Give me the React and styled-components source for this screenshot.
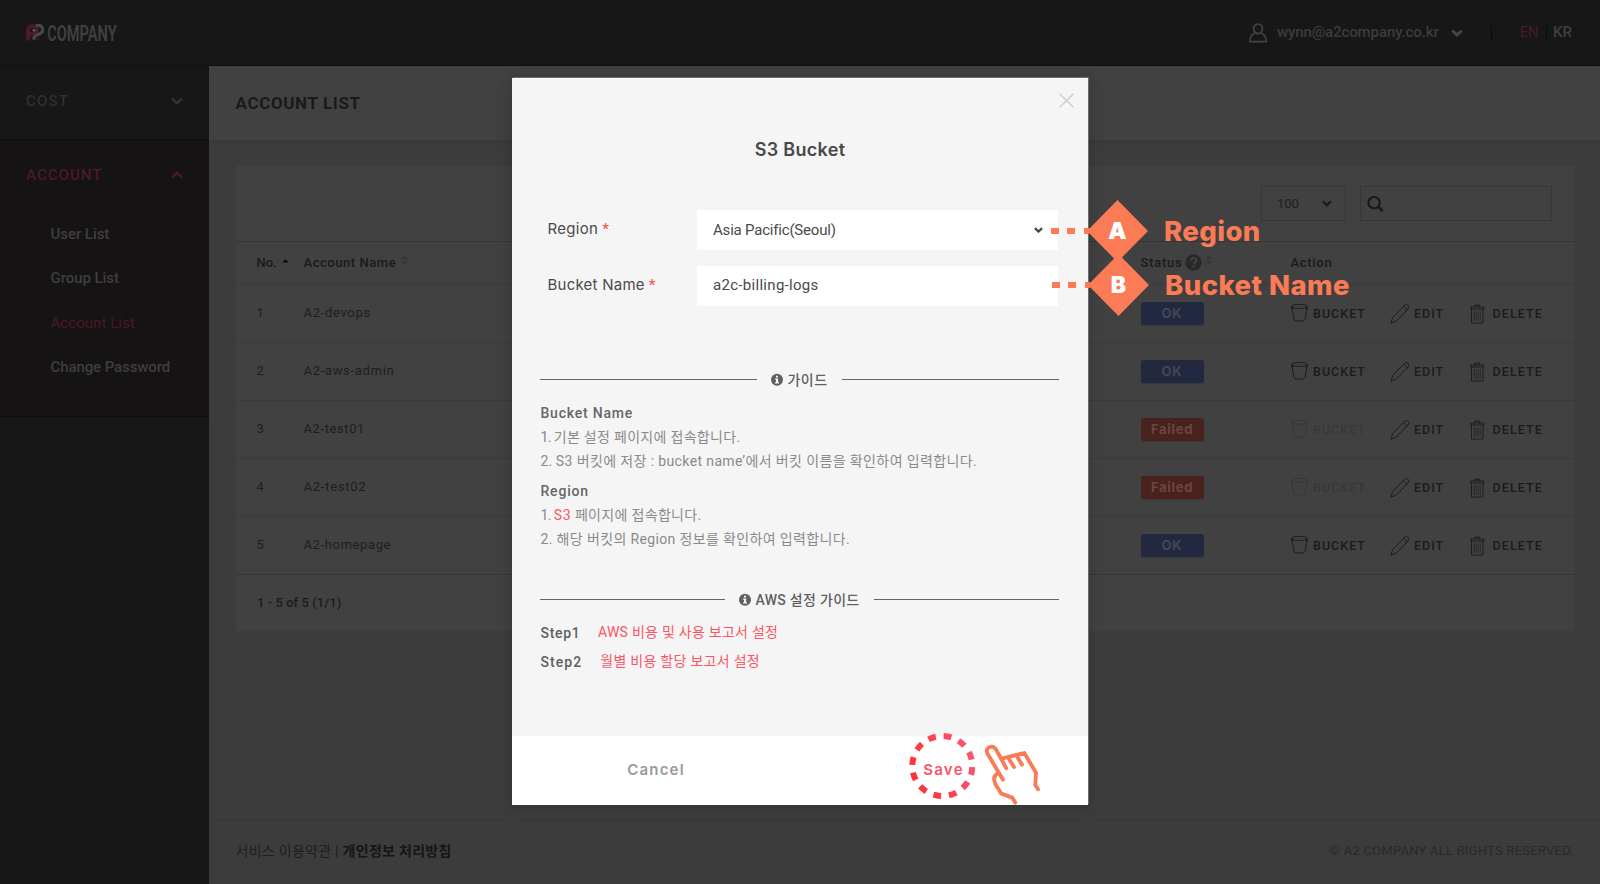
import React from "react";
import styled, { createGlobalStyle } from "styled-components";

const GlobalStyle = createGlobalStyle`
  *, *::before, *::after { box-sizing: border-box; }
  body {
    margin: 0;
    background: #3c3c3c;
    font-family: Roboto, "Noto Sans CJK KR", sans-serif;
    overflow: hidden;
  }
`;

const Page = styled.div`
  position: relative;
  display: flex;
  flex-direction: column;
  height: 884px;
  overflow: hidden;
`;

/* Spacing-adjusted run of text */
const Label = styled.span`
  white-space: pre;
  letter-spacing: ${(p) => p.$ls || 0}px;
`;

const WideLabel = styled(Label)`
  font-family: Inter, "Noto Sans CJK KR", sans-serif;
`;

/* ---------- header ---------- */
const Header = styled.header`
  display: flex;
  align-items: center;
  justify-content: space-between;
  height: 66px;
  padding: 0 28px 0 26px;
  background: #171717;
  border-bottom: 1px solid #101010;
`;

const HeaderRight = styled.div`
  display: flex;
  align-items: center;
  height: 66px;
  font-size: 15px;
  font-weight: 500;
  color: #3c3c3c;
`;

const Email = styled(Label)`
  margin: 0 12px 2px 10px;
`;

const Divider = styled.span`
  width: 1px;
  height: 15px;
  background: #0c0c0c;
  margin: ${(p) => p.$margin};
`;

const Lang = styled(Label)`
  margin-bottom: 2px;
  font-weight: ${(p) => (p.$active ? 400 : 500)};
  color: ${(p) => (p.$active ? "#481a20" : "#404040")};
`;

/* ---------- sidebar ---------- */
const Main = styled.div`
  display: flex;
  flex: 1;
`;

const Sidebar = styled.nav`
  width: 209px;
  background: #171717;
`;

const MenuSection = styled.section`
  background: ${(p) => (p.$open ? "#161314" : "#171717")};
  border-bottom: 1px solid #0f0e0e;
`;

const MenuHead = styled.div`
  display: flex;
  align-items: center;
  justify-content: space-between;
  height: ${(p) => p.$height}px;
  padding: 0 26px ${(p) => (p.$open ? 1 : 3)}px 26px;
  font-size: 15px;
  font-weight: 500;
  color: ${(p) => (p.$open ? "#4b1b21" : "#303030")};
`;

const MenuList = styled.ul`
  list-style: none;
  margin: 0;
  padding: 1px 0 27px 50.5px;
`;

const MenuItem = styled.li`
  height: 44.25px;
  line-height: 44px;
  font-size: 15px;
  font-weight: ${(p) => (p.$active ? 400 : 500)};
  color: ${(p) => (p.$active ? "#481a20" : "#3e3e3e")};
`;

/* ---------- content ---------- */
const Content = styled.main`
  flex: 1;
  display: flex;
  flex-direction: column;
  background: #3c3c3c;
`;

const TitleBar = styled.div`
  height: 74px;
  line-height: 74px;
  padding-left: 26.5px;
  background: #414141;
  box-shadow: 0 2px 4px rgba(0, 0, 0, 0.08);
  font-size: 17px;
  font-weight: 700;
  color: #1a1a1a;
`;

const Card = styled.section`
  width: 1338px;
  margin: 26px 0 0 27px;
  background: #414141;
`;

const Toolbar = styled.div`
  display: flex;
  justify-content: flex-end;
  gap: 14px;
  height: 75px;
  padding: 20px 22px 0 0;
`;

const PageSize = styled.div`
  display: flex;
  align-items: center;
  justify-content: space-between;
  width: 85px;
  height: 35px;
  padding: 0 13px 0 15px;
  border: 1px solid #373737;
  font-size: 13px;
  color: #1e1e1e;
`;

const SearchBox = styled.div`
  display: flex;
  align-items: center;
  width: 192px;
  height: 35px;
  padding-left: 6px;
  border: 1px solid #373737;
`;

const Row = styled.div`
  display: grid;
  grid-template-columns: 47px 837px 150px 1fr;
  align-items: center;
  height: ${(p) => (p.$head ? 43 : 58)}px;
  padding-left: 20.5px;
  border-top: 1px solid ${(p) => (p.$strong ? "#363636" : "#3a3a3a")};
  font-size: 13px;
  font-weight: ${(p) => (p.$head ? 500 : 400)};
  color: ${(p) => (p.$head ? "#1a1a1a" : "#1e1e1e")};
`;

const Cell = styled.div`
  display: flex;
  align-items: center;
  padding-bottom: ${(p) => (p.$lift ? 2 : 0)}px;
`;

const HeadCell = styled(Cell)`
  gap: ${(p) => p.$gap || 5}px;
  padding-bottom: 2px;
`;

const Badge = styled.span`
  width: 63px;
  height: 23px;
  line-height: 23px;
  border-radius: 3px;
  text-align: center;
  font-family: Inter, sans-serif;
  font-size: 13px;
  font-weight: 700;
  letter-spacing: ${(p) => (p.$ok ? 0.8 : 0.7)}px;
  background: ${(p) => (p.$ok ? "#22283f" : "#49211d")};
  color: ${(p) => (p.$ok ? "#424755" : "#6a4644")};
  box-shadow: 0 1px 1px rgba(0, 0, 0, 0.15);
`;

const ActionButton = styled.span`
  display: flex;
  align-items: center;
  gap: ${(p) => p.$gap}px;
  width: ${(p) => p.$width}px;
  font-size: 12.5px;
  font-weight: 500;
  color: ${(p) => (p.$disabled ? "#383838" : "#1b1b1b")};
`;

const CardFooter = styled.div`
  height: 57px;
  line-height: 56px;
  padding-left: 21px;
  border-top: 1px solid #363636;
  font-size: 13px;
  font-weight: 500;
  color: #1c1c1c;
`;

const PageFooter = styled.footer`
  display: flex;
  justify-content: space-between;
  align-items: center;
  height: 64px;
  margin-top: auto;
  padding: 0 26px 5px 26.5px;
  border-top: 1px solid #373737;
  font-size: 14px;
  color: #1e1e1e;
`;

const Copyright = styled(Label)`
  font-size: 13px;
  color: #292929;
`;

const Bold = styled.b`
  font-weight: 700;
  color: #151515;
`;

/* ---------- modal ---------- */
const ModalLayer = styled.div`
  position: absolute;
  inset: 0;
  display: flex;
  justify-content: center;
  align-items: flex-start;
  padding-top: 78px;
`;

const Modal = styled.div`
  position: relative;
  width: 576px;
  height: 727px;
  display: flex;
  flex-direction: column;
  background: #f5f5f5;
  box-shadow: 1px -1px 0 #6c6c6c, 0 0 14px rgba(0, 0, 0, 0.2);
`;

const ModalTop = styled.div`
  display: flex;
  justify-content: flex-end;
  height: 50px;
  padding: 15px 14.5px 0 0;
`;

const ModalTitle = styled.h2`
  margin: 0;
  height: 44px;
  line-height: 44px;
  text-align: center;
  font-size: 18px;
  font-weight: 600;
  color: #484848;
`;

const Form = styled.div`
  display: flex;
  flex-direction: column;
  gap: 16px;
  padding: 38px 30px 0 35.5px;
`;

const Field = styled.div`
  display: flex;
  height: 40px;
  font-size: 15px;
  color: #4a4a4a;
`;

const FieldLabel = styled.div`
  width: 149.5px;
  line-height: 38px;
`;

const Required = styled.span`
  color: #fa5a52;
  font-weight: 500;
  margin-left: 4px;
`;

const Control = styled.div`
  flex: 1;
  display: flex;
  align-items: center;
  justify-content: space-between;
  padding: 0 15px ${(p) => (p.$lift ? 3 : 1)}px 16px;
  background: #fff;
`;

const Guide = styled.div`
  padding: 0 29px 0 28px;
  margin-top: ${(p) => p.$top}px;
  font-size: 14px;
  color: #8a8a8a;
`;

const GuideHeading = styled.div`
  display: flex;
  align-items: center;
  height: 20px;
  font-weight: 500;
  color: #5f5f5f;

  &::before,
  &::after {
    content: "";
    flex: 1;
    height: 1px;
    background: #666;
  }
`;

const HeadingText = styled.span`
  display: flex;
  align-items: center;
  gap: 4px;
  margin: 0 14px;
`;

const GuideLine = styled.div`
  height: 24px;
  line-height: 24px;
  margin-left: 0.5px;
`;

const GuideTerm = styled(GuideLine)`
  height: ${(p) => p.$height || 24}px;
  margin-top: ${(p) => p.$top || 0}px;
  font-weight: 500;
  color: #666;
`;

const Link = styled(Label)`
  color: #fb5565;
`;

const Step = styled.div`
  display: flex;
  gap: ${(p) => p.$gap}px;
  height: 29px;
  line-height: 29px;
  font-weight: 500;
  color: #606060;

  ${Link} {
    font-weight: 400;
    line-height: 27px;
  }
`;

const ModalFooter = styled.div`
  display: grid;
  grid-template-columns: 1fr 1fr;
  height: 69px;
  margin-top: auto;
  background: #fff;
`;

const FooterButton = styled.button`
  border: 0;
  padding: ${(p) => (p.$primary ? "0 1px 3px 0" : "0 0 3px 0")};
  background: none;
  font: 600 15px Inter, sans-serif;
  letter-spacing: ${(p) => p.$ls}px;
  color: ${(p) => (p.$primary ? "#f9556a" : "#9a9a9a")};
`;

/* ---------- call-outs drawn over the page ---------- */
const Callout = styled.div`
  position: absolute;
  left: ${(p) => p.$x}px;
  top: ${(p) => p.$y}px;
  display: flex;
  align-items: center;
  height: 62px;
  color: #fa7b56;
  font-family: Inter, sans-serif;
  font-size: 27.5px;
  font-weight: 800;
`;

const Dashes = styled.span`
  display: flex;
  width: 38px;
  height: 6px;
  background: repeating-linear-gradient(90deg, #fa7b56 0 7.6px, transparent 7.6px 16.4px);
`;

const DiamondBox = styled.span`
  display: grid;
  place-items: center;
  width: 61px;
  height: 62px;
  margin: 0 16px 0 -2px;
  clip-path: polygon(50% 0, 100% 50%, 50% 100%, 0 50%);
  background: #fa7b56;
  color: #fff;
  font-size: 23px;
  font-weight: 900;
`;

const RingSvg = styled.svg`
  position: absolute;
  left: 396px;
  top: 654px;
`;

const HandSvg = styled.svg`
  position: absolute;
  left: 468px;
  top: 663px;
`;

/* ---------- icons ---------- */
const Chevron = ({ w = 12, h = 8, color = "currentColor", sw = 2.5, up }) => (
  <svg width={w} height={h} viewBox="0 0 12 8" preserveAspectRatio="none">
    <path d={up ? "M1.2 6.5 6 1.9l4.8 4.6" : "M1.2 1.5 6 6.1l4.8-4.6"} fill="none" stroke={color} strokeWidth={sw} />
  </svg>
);

const LogoSvg = styled.svg`
  overflow: visible;
`;

const Logo = () => (
  <LogoSvg width="110" height="32" viewBox="0 -6 110 32">
    <path
      d="M0 17.5V7.5C0 3.5 2.8 1.2 6.2 1.2c3.8 0 6.6 2.6 6.6 6 0 3.2-2.6 5.3-5.8 5.3H4.2v5Z M6.3 5.2A1.9 1.9 0 0 0 4.2 7.2V9h2.6c1.3 0 2.1-.8 2.1-1.9S7.9 5.2 6.3 5.2Z"
      fill="#4a1b21"
      fillRule="evenodd"
    />
    <path d="M9.8 2.9C14.8 1.2 17 4.300 16.700 7.100c-.3 3-3 4-5.700 4.900-2.300.8-3.200 2-3.400 4.600" fill="none" stroke="#474747" strokeWidth="3.300" />
    <path d="M9.600 16.800h3.200v-2.200Z" fill="#4a1b21" />
    <circle cx="8" cy="7.200" r="1.500" fill="#565656" />
    <text x="21.200" y="17.700" fontFamily="Roboto, sans-serif" fontSize="22.700" fontWeight="600" fill="#404040" textLength="69.500" lengthAdjust="spacingAndGlyphs">
      COMPANY
    </text>
  </LogoSvg>
);

const UserIcon = () => (
  <svg width="18" height="20" viewBox="0 0 18 20" fill="none" stroke="#444" strokeWidth="1.700">
    <ellipse cx="9" cy="5.800" rx="4.400" ry="4.800" />
    <path d="M5.800 10.200C2.800 11.200.9 13.800.9 18.600h16.200c0-4.800-1.900-7.400-4.900-8.400" />
  </svg>
);

const SearchIcon = () => (
  <svg width="17" height="17" viewBox="0 0 17 17" fill="none" stroke="#191919" strokeWidth="2.200">
    <circle cx="7.100" cy="7.700" r="5.700" />
    <path d="m11.200 11.800 4.600 4.400" strokeWidth="2.600" />
  </svg>
);

const SortSvg = styled.svg`
  margin-bottom: 3px;
`;

const SortIcon = ({ active }) => (
  <SortSvg width="7" height="13" viewBox="0 0 7 13">
    <path d={active ? "M.3 8.500 3.500 5.200l3.200 3.300Z" : "M.3 5.200 3.500 1.900l3.200 3.300Z"} fill={active ? "#080808" : "#353535"} />
    {!active && <path d="M.3 7.500 3.500 10.800l3.200-3.300Z" fill="#353535" />}
  </SortSvg>
);

const HelpIcon = () => (
  <svg width="17" height="17" viewBox="0 0 17 17">
    <circle cx="8.500" cy="8.500" r="8.200" fill="#292929" />
    <path d="M5.900 6.600C6 4.900 7.100 4.100 8.600 4.100c1.600 0 2.700.9 2.700 2.200 0 2-2.500 2-2.600 4" fill="none" stroke="#424242" strokeWidth="1.900" />
    <path d="M7.600 11.300h2.100v2.100H7.600Z" fill="#424242" />
  </svg>
);

const BucketSvg = styled.svg`
  margin-bottom: 2px;
`;

const BucketIcon = ({ disabled }) => (
  <BucketSvg width="17" height="20" viewBox="0 0 17 20" fill="none" stroke={disabled ? "#373737" : "#1a1a1a"} strokeWidth="0.900">
    <ellipse cx="8.500" cy="3.400" rx="7.800" ry="2" />
    <path d="M.7 3.600 3 16.500c.9 2.200 10.100 2.200 11 0L16.300 3.600M.7 3.600l.5 2.700h.9M16.300 3.600l-.5 2.700h-.9" />
    {disabled && <path d="M8.500 1.400V.2" />}
  </BucketSvg>
);

const PencilIcon = () => (
  <svg width="20" height="20" viewBox="0 0 20 20" fill="none" stroke="#1a1a1a" strokeWidth="0.900">
    <path d="M.9 19.200 2.700 13.500 14.600 1.400c1.100-1.100 2.700-.9 3.600 0s1 2.300 0 3.400L6.300 17Z M13.600 2.400l3.600 3.500" />
  </svg>
);

const TrashIcon = () => (
  <svg width="15" height="20" viewBox="0 0 15 20" fill="none" stroke="#1a1a1a" strokeWidth="0.900">
    <path d="M.6 5V3h13.300v2ZM4.900 3V1.200h4.700V3" />
    <path d="M1.500 5v14h11.500V5" />
    <path d="M4.200 7.200v9.800M6.200 7.200v9.800M8.300 7.200v9.800M10.300 7.200v9.800" strokeWidth="0.600" />
  </svg>
);

const CloseIcon = () => (
  <svg width="15" height="15" viewBox="0 0 15 15" stroke="#cdcdcd" strokeWidth="1.400">
    <path d="m.7.700 13.600 13.600M14.300.7.700 14.300" />
  </svg>
);

const InfoIcon = () => (
  <svg width="12" height="13" viewBox="0 0 12 13">
    <circle cx="6" cy="6.700" r="6" fill="#5f5f5f" />
    <path d="M5 2.700h2v1.800H5ZM4.100 5.500h3v3.700h.9v1.300H4V9.200h1V6.800h-.9Z" fill="#f5f5f5" />
  </svg>
);

const Ring = () => (
  <RingSvg width="68" height="68" viewBox="0 0 68 68">
    <defs>
      <linearGradient id="ring" x1="1" y1="0.200" x2="0" y2="0.700">
        <stop offset="0" stopColor="#f95871" />
        <stop offset="1" stopColor="#ff3034" />
      </linearGradient>
    </defs>
    <circle
      cx="34.300"
      cy="34"
      r="30"
      fill="none"
      stroke="url(#ring)"
      strokeWidth="6"
      strokeDasharray="7.850 7.858"
      transform="rotate(2.100 34.300 34)"
    />
  </RingSvg>
);

const Hand = () => (
  <HandSvg width="67" height="65" viewBox="360 95 201 195">
    <g fill="none" stroke="#fa7b56" strokeWidth="11.500" strokeLinecap="round" strokeLinejoin="round">
      <path d="M429 211 383 134C376 120 384 113 394 112 401 112 405 116 408 120L439 177" />
      <path d="M425 148 493 131 528 190 526 227 534 240" />
      <path d="M447 149 462 173M472 143 486 166" />
      <path d="M414 192C402 198 400 210 406 224L424 253 457 265 466 280" />
    </g>
  </HandSvg>
);

const rows = [
  { no: 1, name: "A2-devops", ok: true, ls: 0.68 },
  { no: 2, name: "A2-aws-admin", ok: true, ls: 0.68 },
  { no: 3, name: "A2-test01", ok: false, ls: 0.6 },
  { no: 4, name: "A2-test02", ok: false, ls: 0.75 },
  { no: 5, name: "A2-homepage", ok: true, ls: 0.62 },
];

const menu = [
  { text: "User List", ls: -0.05 },
  { text: "Group List", ls: -0.05 },
  { text: "Account List", ls: 0.06, active: true },
  { text: "Change Password", ls: -0.1 },
];

const TableRow = ({ row }) => (
  <Row>
    <Cell $lift>{row.no}</Cell>
    <Cell $lift>
      <Label $ls={row.ls}>{row.name}</Label>
    </Cell>
    <Cell>
      <Badge $ok={row.ok}>{row.ok ? "OK" : "Failed"}</Badge>
    </Cell>
    <Cell>
      <ActionButton $gap={5.5} $width={99} $disabled={!row.ok}>
        <BucketIcon disabled={!row.ok} />
        <Label $ls={1}>BUCKET</Label>
      </ActionButton>
      <ActionButton $gap={4.5} $width={80.5}>
        <PencilIcon />
        <Label $ls={1}>EDIT</Label>
      </ActionButton>
      <ActionButton $gap={7.5} $width={80}>
        <TrashIcon />
        <Label $ls={1.1}>DELETE</Label>
      </ActionButton>
    </Cell>
  </Row>
);

export default function App() {
  return (
    <Page>
      <GlobalStyle />
      <Header>
        <Logo />
        <HeaderRight>
          <UserIcon />
          <Email $ls={-0.1}>wynn@a2company.co.kr</Email>
          <Chevron w={12} h={8} color="#444" sw={3} />
          <Divider $margin="0 28px 0 28px" />
          <Lang $active $ls={-0.4}>EN</Lang>
          <Divider $margin="0 6px 0 8px" />
          <Lang>KR</Lang>
        </HeaderRight>
      </Header>
      <Main>
        <Sidebar>
          <MenuSection>
            <MenuHead $height={73}>
              <Label $ls={1.2}>COST</Label>
              <Chevron color="#333" />
            </MenuHead>
          </MenuSection>
          <MenuSection $open>
            <MenuHead $height={71} $open>
              <Label $ls={1.05}>ACCOUNT</Label>
              <Chevron up />
            </MenuHead>
            <MenuList>
              {menu.map((m) => (
                <MenuItem key={m.text} $active={m.active}>
                  <Label $ls={m.ls}>{m.text}</Label>
                </MenuItem>
              ))}
            </MenuList>
          </MenuSection>
        </Sidebar>
        <Content>
          <TitleBar>
            <Label $ls={0.62}>ACCOUNT LIST</Label>
          </TitleBar>
          <Card>
            <Toolbar>
              <PageSize>
                <Label>100</Label>
                <Chevron w={10} h={7} color="#191919" />
              </PageSize>
              <SearchBox>
                <SearchIcon />
              </SearchBox>
            </Toolbar>
            <Row $head $strong>
              <HeadCell>
                <Label>No.</Label>
                <SortIcon active />
              </HeadCell>
              <HeadCell>
                <Label $ls={0.55}>Account Name</Label>
                <SortIcon />
              </HeadCell>
              <HeadCell $gap={3}>
                <Label $ls={0.75}>Status</Label>
                <HelpIcon />
                <SortIcon />
              </HeadCell>
              <HeadCell>
                <Label $ls={0.7}>Action</Label>
              </HeadCell>
            </Row>
            {rows.map((r) => (
              <TableRow key={r.no} row={r} />
            ))}
            <CardFooter>
              <Label $ls={0.05}>1 - 5 of 5 (1/1)</Label>
            </CardFooter>
          </Card>
          <PageFooter>
            <Label $ls={0.28}>
              서비스 이용약관 | <Bold>개인정보 처리방침</Bold>
            </Label>
            <Copyright $ls={0.24}>© A2 COMPANY ALL RIGHTS RESERVED.</Copyright>
          </PageFooter>
        </Content>
      </Main>

      <ModalLayer>
        <Modal>
          <ModalTop>
            <CloseIcon />
          </ModalTop>
          <ModalTitle>
            <WideLabel $ls={0.3}>S3 Bucket</WideLabel>
          </ModalTitle>
          <Form>
            <Field>
              <FieldLabel>
                <WideLabel $ls={0.3}>Region</WideLabel>
                <Required>*</Required>
              </FieldLabel>
              <Control>
                <Label $ls={-0.2}>Asia Pacific(Seoul)</Label>
                <Chevron w={9} h={6} color="#484848" sw={3} />
              </Control>
            </Field>
            <Field>
              <FieldLabel>
                <WideLabel $ls={0.24}>Bucket Name</WideLabel>
                <Required>*</Required>
              </FieldLabel>
              <Control $lift>
                <Label $ls={0.3}>a2c-billing-logs</Label>
              </Control>
            </Field>
          </Form>
          <Guide $top={63}>
            <GuideHeading>
              <HeadingText>
                <InfoIcon />
                <Label $ls={0.5}>가이드</Label>
              </HeadingText>
            </GuideHeading>
            <GuideTerm $top={12}>
              <Label $ls={0.78}>Bucket Name</Label>
            </GuideTerm>
            <GuideLine>
              <Label $ls={-0.6}>1. </Label>
              <Label $ls={0.3}>기본 설정 페이지에 접속합니다.</Label>
            </GuideLine>
            <GuideLine>
              <Label $ls={0.1}>2. </Label>
              <Label $ls={0.38}>S3 버킷에 저장 : bucket name’에서 버킷 이름을 확인하여 입력합니다.</Label>
            </GuideLine>
            <GuideTerm $top={6}>
              <Label $ls={0.8}>Region</Label>
            </GuideTerm>
            <GuideLine>
              <Label $ls={-0.6}>1. </Label>
              <Link $ls={0.6}>S3</Link>
              <Label $ls={0.32}> 페이지에 접속합니다.</Label>
            </GuideLine>
            <GuideLine>
              <Label $ls={0.36}>2. 해당 버킷의 Region 정보를 확인하여 입력합니다.</Label>
            </GuideLine>
          </Guide>
          <Guide $top={38}>
            <GuideHeading>
              <HeadingText>
                <InfoIcon />
                <Label $ls={0.3}>AWS 설정 가이드</Label>
              </HeadingText>
            </GuideHeading>
            <GuideTerm as="div" $top={10} $height={58}>
              <Step $gap={17.5}>
                <Label $ls={0.7}>Step1</Label>
                <Link $ls={0.26}>AWS 비용 및 사용 보고서 설정</Link>
              </Step>
              <Step $gap={18}>
                <Label $ls={1.05}>Step2</Label>
                <Link $ls={0.28}>월별 비용 할당 보고서 설정</Link>
              </Step>
            </GuideTerm>
          </Guide>
          <ModalFooter>
            <FooterButton $ls={1.2}>Cancel</FooterButton>
            <FooterButton $primary $ls={1.3}>
              Save
            </FooterButton>
          </ModalFooter>
          <Ring />
          <Hand />
        </Modal>
      </ModalLayer>

      <Callout $x={1051} $y={200}>
        <Dashes />
        <DiamondBox>A</DiamondBox>
        <Label $ls={0.4}>Region</Label>
      </Callout>
      <Callout $x={1052} $y={254}>
        <Dashes />
        <DiamondBox>B</DiamondBox>
        <Label $ls={0.45}>Bucket Name</Label>
      </Callout>
    </Page>
  );
}
